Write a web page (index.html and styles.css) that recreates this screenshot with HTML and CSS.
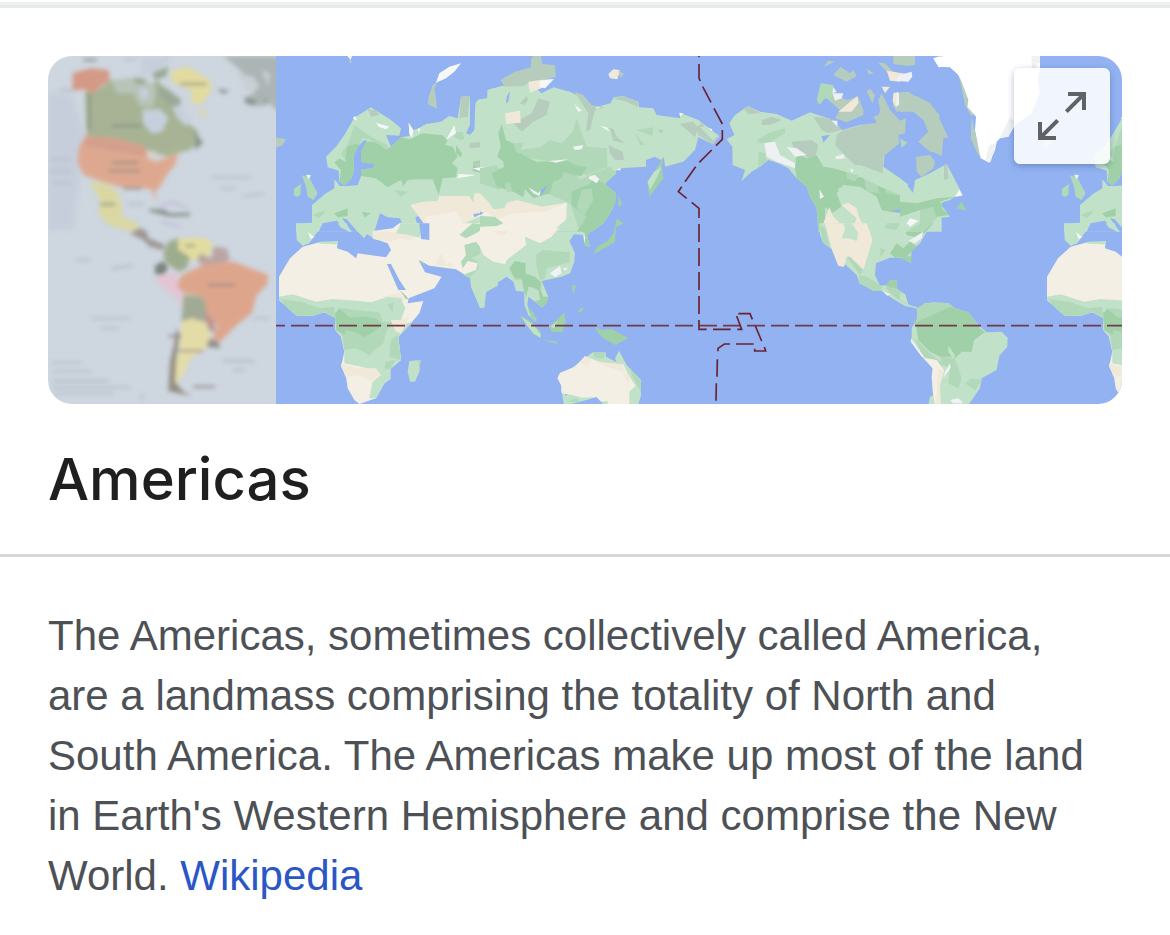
FILE: index.html
```html
<!DOCTYPE html>
<html lang="en">
<head>
  <meta charset="UTF-8" />
  <meta name="viewport" content="width=device-width, initial-scale=1" />
  <title>Americas</title>
  <link rel="stylesheet" href="styles.css">
</head>
<body>
  <main class="panel">
    <div class="media">
      <svg class="thumb" viewBox="0 0 684 1044" preserveAspectRatio="xMidYMid slice" role="img" aria-label="Political map of the Americas">
        <defs>
          <filter id="soft" x="-5%" y="-5%" width="110%" height="110%">
            <feGaussianBlur stdDeviation="6" />
          </filter>
        </defs>
        <rect width="684" height="1044" fill="#ced6df" />
        <g filter="url(#soft)" opacity="0.9">
          <!-- North America -->
          <g transform="translate(-24 -18)">
            <path fill="#c6cedb" d="M24 130L95 130 135 260 100 540H24ZM310 20H400L360 60 300 80Z" />
            <path fill="#a3b08c" d="M135 125L180 115 215 88 240 110 270 90 330 110 350 90 390 130 420 160 440 215 470 240 480 270 450 300 410 310 385 320 310 300 140 258Z" />
            <path fill="#b6c2b4" d="M215 90L300 80 350 110 340 170 300 170 280 130 230 130Z" />
            <path fill="#c6d0dc" d="M308 180L360 178 385 205 365 245 335 250 310 220ZM395 160L425 165 450 205 440 230 410 200ZM300 110L325 120 320 150 300 140ZM370 120L395 125 400 145 375 140Z" />
            <path fill="#95a58f" d="M335 75L345 65 385 50 380 78 350 90ZM350 105L380 115 425 150 415 170 385 165 355 130ZM280 85L320 88 310 105 285 100Z" />
            <path fill="#d6937e" d="M98 70L150 55 205 60 210 90 180 110 160 130 130 118 98 122Z" />
            <path fill="#e0a488" d="M135 258L230 265 315 290 325 315 345 335 415 310 405 345 380 375 360 410 345 425 350 455 335 420 300 412 245 412 200 400 130 375 112 335 115 295Z" />
            <path fill="#d59b84" d="M135 258L230 265 315 290 318 320 200 300 130 290Z" />
            <path fill="#d7d1cb" d="M318 305L345 302 350 325 325 330Z" />
            <path fill="#e4dc98" d="M390 65L440 50 475 70 515 95 510 130 480 165 455 160 455 120 400 100Z" />
            <path fill="#dcd89c" d="M480 175L500 185 485 205ZM150 395L200 400 235 430 245 460 245 500 290 515 270 540 200 520 175 490 180 450Z" />
            <path fill="#a9b1b0" d="M550 18H720V190L690 160 660 170 610 150 645 125 600 60Z" />
            <path fill="#c9ced3" d="M590 70L640 80 660 110 630 130ZM665 60L690 70 685 110Z" />
            <path fill="#849087" d="M325 478L370 478 390 490 450 488 450 498 390 500 330 485ZM455 235L490 278 465 300 465 260ZM530 118L570 120 550 132ZM615 140L650 150 645 168 615 160ZM665 145L685 150 680 162Z" />
            <path fill="none" stroke="#7d8174" stroke-width="6" d="M148 130V240M215 228H305M215 338H295M205 363H300M250 415H305M180 463H225M420 102H500M130 30H170" />
            <path fill="none" stroke="#a6b0c0" stroke-width="4" d="M30 328H95M30 363H95M40 400H95M515 382H635M540 415H585M610 440L670 430M60 120H100M262 462H312" />
            <path fill="none" stroke="#bdb2d2" stroke-width="5" d="M255 28H290M360 470L400 458 445 475M365 515L420 530" />
          </g>
          <!-- South America -->
          <g transform="translate(-24 507)">
            <path fill="#ddd7a0" d="M200 0H290L310 15 280 20Z" />
            <path fill="#978f8c" d="M270 25L300 8 320 20 325 40 375 60 370 75 330 65 310 45Z" />
            <path fill="#e4de98" d="M415 40L490 38 520 55 500 110 450 105 410 80Z" />
            <path fill="#99a885" d="M385 50L415 40 415 75 450 95 440 130 415 140 375 110 370 85Z" />
            <path fill="#757c76" d="M345 122L370 108 385 130 370 150 345 148Z" />
            <path fill="#e6c2d2" d="M345 155L415 140 410 165 425 200 425 245 405 215 365 185Z" />
            <path fill="#b7a09d" d="M470 105L480 85 515 100 520 65 560 70 570 105 500 130Z" />
            <path fill="#dfa083" d="M425 150L500 115 580 110 685 150 680 180 650 210 635 265 590 300 560 330 540 350 515 340 535 305 500 270 490 215 430 205 410 180Z" />
            <path fill="#9da68c" d="M430 210L490 215 500 255 500 290 455 285 425 290Z" />
            <path fill="#bb918a" d="M490 255L520 285 530 320 500 315Z" />
            <path fill="#8d8780" d="M505 340L535 350 540 370 500 365Z" />
            <path fill="#e6dda0" d="M425 290L455 280 500 295 510 335 495 375 450 400 435 440 405 480 400 440 420 370Z" />
            <path fill="#8e867a" d="M410 310L420 330 410 390 405 470 430 500 455 512 415 505 385 498 390 410 402 360Z" />
            <path fill="none" stroke="#8d8080" stroke-width="6" d="M385 333H425M415 378H490M503 180H585M435 62H465M460 485H525" />
            <path fill="none" stroke="#a3aeba" stroke-width="4" d="M110 105H150M215 132L280 120M155 280H270M185 310H235M550 408H645M580 435H615M640 280H690M35 413H125M40 440H155M40 468H205M35 488H270M45 506H220M305 505V525" />
          </g>
        </g>
      </svg>

      <svg class="map" viewBox="0 0 2538 1044" preserveAspectRatio="xMidYMid slice" role="img" aria-label="World map centred on the Pacific">
        <rect width="2538" height="1044" fill="#92b2f2" />

        <g id="west">
          <!-- Europe -->
          <g transform="translate(0 -18)">
            <path fill="#c1e1c9" d="M150 320L180 290 205 255 235 203 285 172 345 210 375 235 370 257 330 255 345 290 375 262 400 258 398 218 412 240 428 235 450 222 495 215 520 198 545 205 555 140 582 138 582 225 570 250 582 254 595 240 598 160 608 148 632 150 640 118 665 113V545H60V522L108 518V465L150 430 175 415V388L192 408 245 405 255 378 255 305 272 272 250 290 232 320 235 360 222 395 205 405 190 395 188 362 155 352Z" />
            <path fill="#a0d0a8" d="M255 300L265 275 300 275 330 298 345 290 375 262 400 268 440 250 500 256 515 270 508 285 530 290 545 320 528 340 545 355 540 382 500 385 488 435 470 388 420 388 370 392 335 412 300 385 255 378Z" />
            <path fill="#b1d8b8" d="M215 285L235 225 255 240 285 260 335 285 335 298 280 268 258 265 245 300 232 320 212 335 195 310ZM535 248L560 245 565 268 550 270 535 260Z" />
            <path fill="#a0d0a8" d="M213 290L240 282 255 285 232 320 235 360 222 395 205 405 190 395 195 360 175 338 190 325 208 335ZM540 285L558 310 555 322 540 310ZM592 335L620 330 660 360V400L635 375 590 362ZM175 490L215 475 215 498 185 502ZM258 485L285 490 265 502ZM375 375L395 390 380 410Z" />
            <path fill="#b6cdbd" d="M555 140L582 138 575 200 550 205ZM485 95L475 115 482 160 482 176 455 162 458 140 470 105ZM275 178L300 180 310 195 285 200ZM582 280L610 275 617 292 580 295ZM0 262L30 268 20 285 0 293ZM590 340L625 335 635 350 600 350Z" />
            <path fill="#f6f8f8" d="M480 98L490 70 520 50 555 40 535 65 510 85ZM214 18H228L224 30ZM300 218L340 230 330 238 308 230ZM230 205L238 197 243 212ZM398 218L412 240 408 265 400 250ZM535 225L540 250 510 270ZM545 382L548 372 600 375 545 385ZM590 355L630 350 610 362ZM425 237L433 235 428 250Z" />
            <path fill="#b6cdbd" d="M217 32H228L224 40Z" />
            <path fill="#92b2f2" d="M240 330L262 338 295 342 290 354 255 358 250 385 245 405 205 408 232 380 236 345ZM272 270L262 272 246 292 234 318 234 345 254 345 254 305Z" />
            <path fill="#b1d8b8" d="M78 376L100 384 125 430 112 450 95 440 90 410ZM55 415L75 402 73 435 60 442 53 432ZM110 495L150 480 130 505ZM355 420L395 425 375 440Z" />
            <path fill="#f6f8f8" d="M90 374L105 376 98 388Z" />
            <path fill="#92b2f2" d="M128 545L140 520 182 512 218 545ZM198 505L212 508 245 545H228ZM295 545L312 490 335 502 372 505 385 545ZM418 502L430 497 460 545H430Z" />
            <path fill="#f0e8d8" d="M403 465L440 455 485 452 490 438 580 438 592 458 595 430 620 430 660 470V545H460L425 495Z" />
            <path fill="#f4efe4" d="M445 500L540 485 558 515 545 545H462ZM610 505L660 498V545H620Z" />
            <path fill="#92b2f2" d="M592 492L622 488 595 502Z" />
            <path fill="#c1e1c9" d="M565 520L610 500 660 490V510L600 525 580 545H560Z" />
          </g>
          <!-- Africa and the Middle East -->
          <g transform="translate(0 507)">
            <path fill="#c1e1c9" d="M60 -5H133L128 15 100 55 80 62 62 45ZM185 -5H212L222 20 195 8ZM235 -5H295V40L272 28 265 40 240 15Z" />
            <path fill="#f4efe4" d="M290 18L350 10 370 -5H665V180L630 200 612 248 583 160 540 133 460 122 428 105 447 142 497 155 475 190 398 220 395 235 442 228 430 265 405 295 367 335 375 405 343 432V462L325 475 300 520 250 537 235 525 215 490 210 455 195 425 205 380 195 335 178 315V280L145 262 110 272H62L9 225V155L42 100 80 65 130 52 185 50 183 70 215 80 240 100 245 85 330 97 345 75 335 55 290 40Z" />
            <path fill="#f0e8d8" d="M290 18L430 30 400 45 370 40 340 50 292 42ZM478 120L495 85 510 120 525 110 528 125ZM320 215L370 205 395 225 360 225Z" />
            <path fill="#c1e1c9" d="M360 25L375 -5H440L430 38 390 28ZM130 50L185 48V58L130 56ZM9 215L50 208 120 230 170 222 250 228 285 232 335 215 375 220 388 250 375 285 345 285 355 310 405 290 405 295 367 335 375 405 343 432V462L325 475 300 520 280 520 290 470 315 450 300 435 205 415 205 380 195 335 178 315V280L145 262 62 272 9 225Z" />
            <path fill="#b1d8b8" d="M15 222L80 232 130 250 175 245 178 280 145 262 110 272H62L25 240ZM175 265L200 250 240 255 310 262 320 290 350 290 330 320 322 355 290 380 280 390 240 370 205 375 200 335 180 300ZM345 345L365 330 375 405 340 395ZM330 410L358 405 343 432 325 430ZM335 240L352 232 350 262Z" />
            <path fill="#a0d0a8" d="M178 265L190 250 220 278 260 275 300 280 320 300 285 325 265 337 240 322 210 315 205 330 180 315Z" />
            <path fill="#f0e8d8" d="M195 415L240 430 300 430 315 450 285 468 250 450 208 455ZM345 285L375 285 400 275 375 325 360 320Z" />
            <path fill="#f6f8f8" d="M95 22L115 35 105 43Z" />
            <path fill="#92b2f2" d="M430 -5H460V45L435 42ZM333 117L345 117 370 165 390 195 367 195Z" />
            <path fill="#a0d0a8" d="M370 195L390 212 397 222 390 222ZM428 108L440 110 447 122Z" />
            <path fill="#b1d8b8" d="M565 60L600 50 620 75 665 95V180L630 200 625 248 612 248 585 185 583 160 560 150 600 135 605 115 575 108 560 130 555 110 570 90ZM550 30L590 -5 640 0 600 25 570 40Z" />
            <path fill="#c1e1c9" d="M615 85L665 100V182L630 200 625 248 612 248 585 185 583 155 608 130 605 110 585 100Z" />
            <path fill="#c1e1c9" d="M400 408L433 405 430 440 417 470H402L395 440Z" />
            <path fill="#b1d8b8" d="M427 405H434L430 440Z" />
          </g>
        </g>

        <!-- Siberia -->
        <g transform="translate(612 -18)">
          <path fill="#c1e1c9" d="M0 148L22 145V120L65 108 100 102 145 95 185 130 220 112 270 125 320 150 335 175 392 160 400 142 430 138 475 155 478 172 520 175 530 195 600 205V188L655 210 718 258 700 283 655 262 645 300 610 335 555 350 552 322 542 330 525 320 498 330V350L420 355 400 370 375 402 408 430 405 460 390 490 370 520 335 545H0Z" />
          <path fill="#b6cdbd" d="M62 90L105 65 153 52V28L160 18H183L187 42 225 45 228 80 185 92 150 95 130 108 75 110ZM155 190L175 145 210 155 200 195 160 215 125 245 100 220ZM120 160L140 138 145 150 130 165ZM283 125L310 135 335 165 375 172 345 180 330 240 318 245 325 190ZM388 230L402 240 410 262 435 280 400 272ZM385 285L428 305 432 330 405 330 390 310ZM398 145L430 138 475 155V172L440 155ZM600 222L640 215 655 235 645 262ZM650 230L665 220 715 262 700 283 655 255ZM535 238L552 242 540 250Z" />
          <path fill="#c1e1c9" d="M660 232L675 228 712 258 700 272Z" />
          <path fill="#f0e8d8" d="M145 95L180 90 215 88 195 110 150 128ZM75 190L120 182 122 218 78 222ZM385 72L400 58 420 60 412 88 390 85Z" />
          <path fill="#b6cdbd" d="M415 60L432 72 420 85Z" />
          <path fill="#f6f8f8" d="M180 92L222 87 195 115 178 110ZM283 162L305 182 295 185ZM360 228L380 232 390 245ZM278 290L310 285 305 298 285 300ZM685 233L697 238 695 243ZM410 357L425 355 418 362ZM348 172L362 172 350 176ZM598 188L610 190 600 200ZM0 352L18 352 10 360Z" />
          <path fill="#92b2f2" d="M80 140L90 122 85 155 78 160Z" />
          <path fill="#b1d8b8" d="M100 280L130 278 122 300 180 292 210 270 245 280 278 245 290 205 320 290 380 295 382 350 320 375 280 350 220 335 120 320ZM468 240L520 232 518 258ZM465 250L495 285 480 285ZM0 355L50 345 70 380 60 420 0 400ZM230 375L270 350 300 390 340 370 390 350 410 370 375 402 408 430 390 490 340 540 300 545 270 460 200 430Z" />
          <path fill="#a0d0a8" d="M52 320L62 290 55 250 65 222 78 270 100 280 110 305 170 335 262 332 285 345 320 352 305 378 280 375 250 365 245 385 220 395 210 430 160 445 135 418 130 442 100 425 50 410 35 370 72 350 70 335ZM275 425L305 412 325 405 345 385 375 402 408 430 405 460 390 490 370 520 335 545H290L320 500 275 465Z" />
          <path fill="#b1d8b8" d="M75 400L90 395 97 425 80 425ZM305 420L335 415 340 450 310 500 290 470Z" />
          <path fill="#f0f3f4" d="M330 378L345 375 358 388 350 400 325 385ZM145 412L175 430 182 420 178 438 160 430ZM205 333L265 328 230 338ZM278 290L310 285 305 298 285 300Z" />
          <path fill="#92b2f2" d="M182 420L203 405 185 437Z" />
          <path fill="#f0e8d8" d="M0 430L25 455 40 478 72 475 80 458 110 450 150 460 185 470 260 458V505L215 545H0V495L12 490 0 480Z" />
          <path fill="#f4efe4" d="M0 480L60 505 100 490 195 485 260 458 255 512 215 545H0L10 490Z" />
          <path fill="#b1d8b8" d="M0 498L45 500 70 520 50 528 0 530Z" />
          <path fill="#92b2f2" d="M0 487H12L0 495Z" />
          <path fill="#a0d0a8" d="M552 320L545 350 550 385 508 440 502 395 520 370ZM415 435L427 462 415 470ZM410 505L430 520 405 533Z" />
          <path fill="#c1e1c9" d="M545 350L532 380 510 420 503 395 522 365Z" />
        </g>

        <!-- East Asia and Australia -->
        <g transform="translate(612 507)">
          <path fill="#c1e1c9" d="M0 20H340L328 20 322 35 330 65 315 62 310 30 282 28 268 48 285 85 283 110 270 145 245 155 185 168 205 215 200 235 185 247 165 230 145 215 142 240 155 270 170 280 165 290 145 270 133 240V200L108 198 100 170 80 155 50 175 15 205 12 245 0 248Z" />
          <path fill="#f4efe4" d="M0 10H235L215 35 180 55 135 35 138 60 80 105 75 118 40 110 10 90 0 65Z" />
          <path fill="#f0e8d8" d="M35 18H85L75 30 55 28ZM225 15L240 10 215 32Z" />
          <path fill="#b1d8b8" d="M168 90L190 75 270 82 268 112 230 122 200 130 195 160 180 165 170 125ZM88 130L135 115 140 150 175 165 185 190 165 200 145 185 130 190 128 165 105 165Z" />
          <path fill="#a0d0a8" d="M88 130L105 108 137 115 135 145 165 155 185 175 180 190 190 215 205 215 200 235 185 247 165 228 180 225 165 190 145 185 140 215 133 200 125 160 105 160ZM300 15L320 5H340L330 20 322 35 330 65 315 62 315 25ZM408 -5H428L408 5 405 50 365 75 340 88 352 65 385 45 400 25Z" />
          <path fill="#c1e1c9" d="M140 205L150 185 175 195 180 222 155 220Z" />
          <path fill="#f0f3f4" d="M210 145L240 122 245 145 225 157ZM248 130L265 128 255 138ZM310 30L316 35 313 55Z" />
          <path fill="#a0d0a8" d="M142 245L160 262 170 290 155 283ZM118 270L155 290 182 320 183 340 160 328 140 300ZM207 305L230 285 252 262 257 290 247 322 215 320ZM345 305L365 315 395 312 445 340 405 360 370 340 355 325ZM190 346L228 348 232 357ZM275 182L288 180 280 210ZM293 258L310 245 308 258 298 264Z" />
          <path fill="#c1e1c9" d="M125 275L160 300 182 328 180 338 160 325 140 300ZM212 305L232 288 222 310ZM338 382H377L378 395 410 412 405 400 417 377 440 420 483 465V510L475 540H252L243 490 258 512 270 500 240 460 260 440Z" />
          <path fill="#f4efe4" d="M232 460L240 443 285 425 315 393 350 408 380 415 430 418 445 450 467 482 448 500V540H385L382 528 355 530 350 516 310 518 275 510 245 505 243 480Z" />
          <path fill="#f0e8d8" d="M300 415L315 393 335 405 320 425ZM350 410L430 418V440L380 425ZM425 440L445 450 448 480Z" />
          <path fill="#b1d8b8" d="M338 382H377L370 400 345 398ZM450 430L483 470V500L460 460ZM260 530L290 520 300 530Z" />
          <path fill="#92b2f2" d="M260 540L300 530 350 517 372 540Z" />
        </g>

        <!-- Alaska and Canada -->
        <g transform="translate(1272 -18)">
          <path fill="#c1e1c9" d="M88 220L105 195 145 168 180 185 230 192 275 212 330 187 370 200 400 210 425 240 480 225 530 220 555 300 550 350 600 385 640 415 650 395 725 355V545H355L350 475 330 440 320 410 290 385 265 355 235 340 205 330 180 350 155 365 125 393 135 360 98 345 97 290 80 268 103 255Z" />
          <path fill="#b6cdbd" d="M130 175L145 168 182 190 145 192ZM185 210L215 200 245 210 210 225 185 225ZM275 275L335 270 355 285 345 325 320 320 280 290ZM340 200L395 205 425 240 385 250 365 240ZM410 255L430 240 500 222 530 220 540 180 535 150 545 130 570 180 600 212 618 205 615 250 595 255 598 280 550 320 548 370 480 345 440 345 405 290ZM590 130L610 125 640 138 650 138 690 160 718 195V310L690 305 655 275 685 245 670 205 640 180 590 185 578 165ZM648 320L690 315 705 335 700 355 665 380 650 365ZM400 75L422 50 450 70 460 60 470 78 440 95ZM385 150L400 130 440 150 475 140 490 180 490 195 440 217 405 205 420 180ZM580 18H645V45L620 48 580 42ZM500 125L510 115 525 135 518 160ZM370 50L385 32 405 35ZM500 55L522 72 505 72ZM605 270L620 280 605 295ZM535 38L555 40 580 65 560 65ZM520 200L535 195 535 225Z" />
          <path fill="#b1d8b8" d="M350 150L362 100 400 105 405 125 390 150 375 145 358 165ZM170 270L215 245 255 235 255 250 215 275 180 280ZM175 305L195 310 200 335 175 350ZM600 265L622 278 605 290Z" />
          <path fill="#a0d0a8" d="M285 355L290 310 320 325 350 315 370 350 440 360 470 385 490 375 520 400 540 410 590 420 620 445 650 455 725 445V500L700 480 660 530 620 490 570 485 540 480 530 440 480 410 430 405 410 430 425 470 395 490 375 470V545H355L350 475 330 440 320 410 290 385Z" />
          <path fill="#b1d8b8" d="M440 360L455 355 475 375 465 395 440 385ZM490 375L520 382 540 430 500 425ZM545 390L600 410 620 440 560 430Z" />
          <path fill="#c1e1c9" d="M355 280L375 270 410 290 470 350 600 385 625 410 635 450 600 435 530 405 470 375 400 355 370 340ZM415 415L440 408 490 420 530 440 545 480 580 490 620 500V545H400L395 500 425 470Z" />
          <path fill="#f0e8d8" d="M415 185L445 160 472 138 475 160 455 185ZM425 465L445 458 470 475 478 505 500 545H455L470 505ZM370 520L388 472 400 500 420 520 425 545H372ZM560 62L580 65 620 72 600 95 570 92ZM545 110L570 110 555 130ZM580 130L595 125 598 160 588 172 578 155Z" />
          <path fill="#eef0f4" d="M193 280L225 275 240 315 285 340V355L230 335 200 320ZM260 290L290 295 320 315 285 320ZM398 130L430 130 425 145 405 152ZM600 75L635 65 637 80 625 95 585 92ZM700 25L720 18V55ZM405 320L430 312 435 325 410 328ZM358 418L372 440 360 447ZM620 520L635 505 655 515 635 530ZM400 112L410 125 397 130ZM625 448L640 440 635 452ZM395 212L412 212V230ZM450 355L462 360 455 370ZM590 130H597V165L588 168Z" />
          <path fill="#92b2f2" d="M365 258L390 255 370 278ZM622 405L642 400 640 435 630 435ZM570 485L605 475 605 488ZM620 498L635 515 622 520ZM390 205L400 205 395 212Z" />
        </g>

        <!-- United States, Mexico -->
        <g transform="translate(1272 507)">
          <path fill="#c1e1c9" d="M357 -5H705L680 20 660 55 635 75 632 115 615 98 570 98 528 115 525 150 540 182 560 180 570 165 592 165 588 200 615 207 625 240 652 247 650 250 615 243 580 222 545 198 520 197 478 175 470 150 435 118 430 125 415 122 395 72 370 55 360 30Z" />
          <path fill="#f0e8d8" d="M375 -5H500L518 45 490 135 440 95 432 125 415 122 395 72Z" />
          <path fill="#c1e1c9" d="M425 40L435 15 430 -5H455L475 25 470 48 445 40Z" />
          <path fill="#b1d8b8" d="M360 0L375 10 390 68 368 52ZM540 70L558 75 542 95ZM560 -5H600L590 15 555 10ZM475 150L500 155 545 182 545 198 520 197 478 175ZM440 95L450 95 490 135 480 150Z" />
          <path fill="#a0d0a8" d="M570 85L590 55 610 70 630 50 650 65 620 95 585 98ZM560 180L570 165 592 165 588 200 560 192ZM600 98L635 92 632 115ZM610 -5H700L660 40 620 30Z" />
          <path fill="#b1d8b8" d="M560 185L590 190 615 207 625 240 595 225 565 200Z" />
          <path fill="#eef0f4" d="M625 48L670 20 665 40 645 55ZM548 198L572 208 562 212ZM625 0L645 -5 630 10Z" />
        </g>

        <!-- Labrador and Greenland -->
        <g transform="translate(1872 -18)">
          <path fill="#c1e1c9" d="M0 400L25 410 40 430 45 390 90 370 140 342 165 390 188 435 165 440 150 450 120 460 150 500 110 505 70 545H0Z" />
          <path fill="#a0d0a8" d="M0 455L50 460 110 445 165 440 120 455 130 480 150 495 110 500 90 520 60 480 0 500ZM170 475L185 455 200 482Z" />
          <path fill="#b1d8b8" d="M60 480L100 470 110 505 70 545H20L60 520Z" />
          <path fill="#b6cdbd" d="M132 345L142 342 145 385 132 390ZM0 130L25 125 50 142 90 160 115 200 145 262 130 265 125 318 90 300 55 275 85 245 70 210 40 185 0 185Z" />
          <path fill="#f6f8f8" d="M165 440L178 418 187 437ZM20 520L30 505 55 512 30 530Z" />
          <path fill="#b6cdbd" d="M175 70L185 75 205 155 222 190 215 200 235 290 250 330 232 310 212 265 215 200 195 165Z" />
          <path fill="#a0d0a8" d="M195 160L215 165 215 175 200 170Z" />
          <path fill="#fff" d="M100 25L130 18H420V60L412 90 420 125 395 190 345 225 325 260 300 265 290 275 285 300 268 338 242 325 235 290 225 240 228 200 202 170 205 150 185 95 175 75 150 52 115 50Z" />
          <path fill="#eff2f3" d="M395 18H410V60H395ZM410 38L420 40V18H410ZM330 200L342 215 325 260 300 262ZM268 285L288 280 272 335 255 330Z" />
        </g>

        <!-- South America -->
        <g transform="translate(1872 507)">
          <path fill="#c1e1c9" d="M0 205L15 207 25 240 48 247 52 250 75 235 100 232 145 234 165 250 205 262 235 300 260 322 305 320 323 338 322 365 298 392 290 435 245 460 240 490 205 540H85L90 515 100 510 98 430 70 400 35 345V310L52 280 50 250 0 225Z" />
          <path fill="#a0d0a8" d="M40 290L85 270 150 243 165 250 205 262 240 310 255 322 222 345 215 380 185 380 165 400 145 365 155 395 120 395 90 380 55 345 48 300Z" />
          <path fill="#b1d8b8" d="M52 250L75 235 145 234 155 243 85 275 50 290ZM120 395L165 400 175 430 185 460 175 490 145 475 150 430 130 420ZM195 475L215 460 245 465 225 495ZM45 340L90 385 130 415 125 425 70 400Z" />
          <path fill="#c1e1c9" d="M145 362L165 390 160 402 145 380Z" />
          <path fill="#f4efe4" d="M70 398L110 405 132 435 120 480 122 540H105L98 500 95 455 98 430Z" />
          <path fill="#f0e8d8" d="M115 430L132 440 120 480V540H108Z" />
          <path fill="#f0f3f4" d="M150 415L152 428 130 460 135 440ZM150 525L175 520 190 535 160 535ZM33 340L75 400 65 395 32 350Z" />
        </g>

        <use href="#west" x="2304" />

        <!-- Equator and date line -->
        <path class="grid-line" stroke-dasharray="54 18" d="M-27 809H2538" />
        <path class="date-line" stroke-dasharray="54 18" d="M1269 774V482" />
        <path class="date-line" d="M1269 0V4M1269 24V67L1273 75M1280 92L1305 139M1314 157L1339 204M1339 222V250L1320 269M1307 282L1270 319M1259 332L1227 377M1217 392L1207 407 1232 427M1247 439L1269 457V482" />
        <path class="date-line" d="M1269 792V820H1292M1311 820H1364M1384 820H1397L1382 780M1387 773H1422L1429 790M1438 810L1457 855M1465 873L1469 885H1436V878M1433 864H1380M1362 864H1345L1326 877V886M1324 910L1323 962M1321 982L1320 1034" />
      </svg>

      <button class="expand" type="button" aria-label="Expand map">
        <svg viewBox="0 0 288 288" fill="none" stroke="#5f6368" stroke-width="12" aria-hidden="true">
          <path d="M162 78H210V126M157 131L210 78M78 162V210H126M131 157L78 210" />
        </svg>
      </button>
    </div>

    <h1 class="title">Americas</h1>

    <section class="about">
      <p>The Americas, sometimes collectively called America, are a landmass comprising the totality of North and South America. The Americas make up most of the land in Earth's Western Hemisphere and comprise the New World. <a href="#wikipedia">Wikipedia</a></p>
    </section>
  </main>
</body>
</html>
```

FILE: styles.css
```css
* {
  box-sizing: border-box;
}

body {
  margin: 0;
  background-color: #fff;
  color: #4d5156;
  font-family: "Liberation Sans", Arial, sans-serif;
}

.panel {
  margin-top: 2px;
  border-top: 3px solid #eef1f4;
}

.panel::before {
  content: "";
  display: block;
  height: 3px;
  background-color: #e8eaea;
}

/* Thumbnail and map strip */
.media {
  position: relative;
  display: flex;
  height: 348px;
  margin: 48px 48px 0;
  border-radius: 24px;
  overflow: hidden;
}

.thumb {
  flex: none;
  width: 228px;
  height: 100%;
}

.map {
  flex: 1;
  min-width: 0;
  height: 100%;
}

.grid-line,
.date-line {
  fill: none;
  stroke: #743a48;
  stroke-width: 5;
}

.date-line {
  stroke: #6c2233;
}

.expand {
  position: absolute;
  top: 12px;
  right: 12px;
  width: 96px;
  height: 96px;
  padding: 0;
  border: none;
  border-radius: 6px;
  background-color: rgba(255, 255, 255, 0.87);
  box-shadow: 0 2px 6px rgba(40, 60, 110, 0.35);
  cursor: pointer;
}

.expand svg {
  display: block;
  width: 100%;
  height: 100%;
}

.title {
  margin: 0;
  padding: 39px 48px;
  border-bottom: 3px solid #d6d6d6;
  color: #1f1f1f;
  font-family: Inter, Roboto, sans-serif;
  font-size: 58px;
  font-weight: 500;
  line-height: 72px;
}

.about {
  padding: 49px 64px 30px 48px;
  font-size: 42px;
  line-height: 60px;
}

.about p {
  margin: 0;
}

.about a {
  color: #2a56c6;
  text-decoration: none;
}
```
